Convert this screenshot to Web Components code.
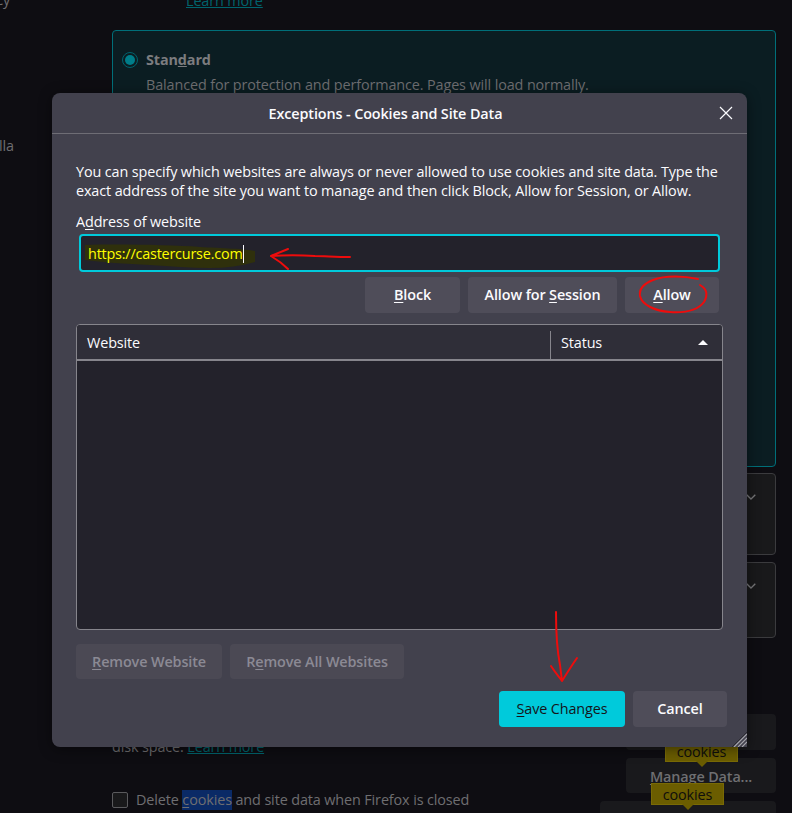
<!DOCTYPE html>
<html lang="en">
<head>
<meta charset="utf-8">
<title>Exceptions - Cookies and Site Data</title>
<style>
  html, body { margin: 0; padding: 0; background: #0e0d12; }
</style>
</head>
<body>
<pref-page>
  <pref-card selected radio>
    <b slot="title">Stan<u>d</u>ard</b>
    Balanced for protection and performance. Pages will load normally.
  </pref-card>
  <pref-card chevron style="height:82px;margin-top:6px"></pref-card>
  <pref-card chevron style="height:76px;margin-top:7px"></pref-card>
</pref-page>

<exceptions-dialog heading="Exceptions - Cookies and Site Data">
  <p>You can specify which websites are always or never allowed to use cookies and site data. Type the exact address of the site you want to manage and then click Block, Allow for Session, or Allow.</p>
</exceptions-dialog>

<red-marks></red-marks>

<script>
// Fenster-Button, Varianten über Attribute: primary, disabled, dim
class XButton extends HTMLElement {
  constructor() {
    super();
    this.attachShadow({ mode: 'open' });
    this.shadowRoot.innerHTML = `
      <style>
        :host {
          display: flex;
          position: relative;
          box-sizing: border-box;
          height: 36px;
          align-items: center;
          justify-content: center;
          border-radius: 4px;
          background: #4f4d59;
          color: #fbfbfe;
          font-weight: 600;
          white-space: nowrap;
        }
        :host([primary]) { background: #00cadb; color: #15141a; font-weight: 400; }
        :host([disabled]) { background: #4b4954; color: #8b8a94; }
        :host([dim]) { background: #19191c; color: #6f6f72; padding-top: 2px; }
        u { text-underline-offset: 2px; }
      </style>
      <slot></slot>
    `;
  }
}
customElements.define('x-button', XButton);

// Gelbe Suchmarkierung über den Einstellungen
class SpotlightTip extends HTMLElement {
  constructor() {
    super();
    this.attachShadow({ mode: 'open' });
    this.shadowRoot.innerHTML = `
      <style>
        :host {
          position: absolute;
          z-index: 1;
          box-sizing: border-box;
          height: 22px;
          width: 73px;
          padding-top: 2px;
          display: flex;
          align-items: center;
          justify-content: center;
          background: #6b5d00;
          border: 1px solid #796a05;
          color: #0f0e0c;
          font-weight: 400;
        }
        :host::after {
          content: '';
          position: absolute;
          left: 50%;
          bottom: -6px;
          margin-left: -6px;
          border: 6px solid transparent;
          border-bottom: 0;
          border-top-color: #6b5d00;
        }
      </style>
      <slot></slot>
    `;
  }
}
customElements.define('spotlight-tip', SpotlightTip);

class PrefCard extends HTMLElement {
  constructor() {
    super();
    this.attachShadow({ mode: 'open' });
    const radio = this.hasAttribute('radio') ? '<span class="radio"></span>' : '';
    const chevron = this.hasAttribute('chevron')
      ? '<svg class="chev" width="10" height="6" viewBox="0 0 10 6"><path d="M.7.7 5 5 9.3.7" fill="none" stroke="#77777a" stroke-width="1.3"/></svg>'
      : '';
    this.shadowRoot.innerHTML = `
      <style>
        :host {
          display: block;
          position: relative;
          box-sizing: border-box;
          border: 1px solid #3b3b3e;
          border-radius: 4px;
          background: #19191b;
          color: #6e6e71;
        }
        :host([selected]) {
          height: 437px;
          border-color: #006f79;
          background: #0b1d22;
        }
        .row { display: flex; gap: 8px; padding: 17px 9px 0; align-items: center; line-height: 24px; color: #7c7c7f; }
        .radio {
          box-sizing: border-box;
          width: 16px;
          height: 16px;
          border-radius: 50%;
          border: 1.5px solid #00626c;
          background: #007d89;
          background-clip: content-box;
          padding: 2px;
        }
        .desc { padding: 2px 0 0 33px; line-height: 22px; }
        .chev { position: absolute; right: 19px; top: 20px; }
      </style>
      <div class="row">${radio}<slot name="title"></slot></div>
      <div class="desc"><slot></slot></div>
      ${chevron}
    `;
  }
}
customElements.define('pref-card', PrefCard);

// Der abgedunkelte about:preferences-Hintergrund
class PrefPage extends HTMLElement {
  constructor() {
    super();
    this.attachShadow({ mode: 'open' });
    this.shadowRoot.innerHTML = `
      <style>
        :host {
          display: flex;
          isolation: isolate;
          height: 813px;
          overflow: hidden;
          background: #0e0d12;
          color: #6e6e71;
          font: 14.4px/20px "Open Sans", "Noto Sans", sans-serif;
          letter-spacing: -.12px;
        }
        a { color: #00646d; text-decoration: underline; }
        u { text-underline-offset: 2px; }
        .side {
          flex: none;
          width: 14px;
          display: flex;
          flex-direction: column;
          align-items: flex-end;
          overflow: hidden;
          white-space: nowrap;
          padding-top: 136px;
          position: relative;
        }
        .side .top { position: absolute; top: -10px; right: 4px; }
        main { flex: none; width: 664px; margin-left: 98px; padding-top: 30px; position: relative; }
        .learn { position: absolute; left: 74px; top: -9px; }
        .stack { position: relative; height: 175px; }
        .disk { position: absolute; left: 0; top: 99px; }
        .del { position: absolute; left: 0; top: 152px; display: flex; align-items: center; gap: 8px; white-space: nowrap; }
        .del i {
          box-sizing: border-box;
          width: 16px;
          height: 16px;
          border: 1px solid #5a5a5d;
          border-radius: 2px;
          background: #19191b;
        }
        mark { background: #0a2a66; color: inherit; padding: 0; display: inline-block; line-height: 20px; }
        .acts { position: absolute; right: 0; top: 76px; width: 150px; display: flex; flex-direction: column; gap: 8px; }
        .acts x-button:nth-child(2) { height: 35px; }
        .acts .wide { width: 176px; margin-left: -26px; }
        .one { left: 39px; top: 26px; }
        .two { left: 25px; top: 25px; }
      </style>
      <div class="side"><span class="top">Privacy</span><span>More from Mozilla</span></div>
      <main>
        <a class="learn">Learn more</a>
        <slot></slot>
        <div class="stack">
          <div class="disk">disk space. <a>Learn more</a></div>
          <div class="del"><i></i><span>Delete <mark><u>c</u>ookies</mark> and site data when Firefox is closed</span></div>
          <div class="acts">
            <x-button dim><spotlight-tip class="one">cookies</spotlight-tip></x-button>
            <x-button dim><span><u>M</u>anage Data...</span><spotlight-tip class="two">cookies</spotlight-tip></x-button>
            <x-button dim class="wide"></x-button>
          </div>
        </div>
      </main>
    `;
  }
}
customElements.define('pref-page', PrefPage);

class SiteTable extends HTMLElement {
  constructor() {
    super();
    this.attachShadow({ mode: 'open' });
    this.shadowRoot.innerHTML = `
      <style>
        :host {
          display: flex;
          flex-direction: column;
          box-sizing: border-box;
          height: 307px;
          border: 1px solid #86858c;
          border-radius: 4px;
          background: #23222b;
          overflow: hidden;
        }
        header {
          flex: none;
          display: grid;
          grid-template-columns: 473px 1fr;
          height: 36px;
          box-sizing: border-box;
          background: #2f2e38;
          border-bottom: 2px solid #86858c;
          align-items: end;
        }
        .name { padding: 2px 0 0 10px; align-self: center; }
        .status {
          display: flex;
          justify-content: space-between;
          align-items: center;
          height: 28px;
          box-sizing: border-box;
          padding: 0 14px 4px 10px;
          border-left: 1px solid #86858c;
        }
      </style>
      <header>
        <span class="name">Website</span>
        <span class="status">Status
          <svg width="10" height="5" viewBox="0 0 10 5"><path d="M5 0 10 5H0Z" fill="#fbfbfe"/></svg>
        </span>
      </header>
    `;
  }
}
customElements.define('site-table', SiteTable);

class ExceptionsDialog extends HTMLElement {
  constructor() {
    super();
    this.attachShadow({ mode: 'open' });
    const heading = this.getAttribute('heading');
    this.shadowRoot.innerHTML = `
      <style>
        :host {
          position: absolute;
          left: 52px;
          top: 93px;
          width: 695px;
          height: 654px;
          display: flex;
          flex-direction: column;
          background: #42414d;
          border-radius: 8px 8px 0 8px;
          color: #fbfbfe;
          font: 14.4px/20px "Open Sans", "Noto Sans", sans-serif;
          letter-spacing: -.12px;
          box-shadow: 0 2px 14px rgba(0, 0, 0, .45);
        }
        .title {
          flex: none;
          position: relative;
          height: 41px;
          box-sizing: border-box;
          padding: 1px 28px 0 0;
          border-bottom: 1px solid #6e6d75;
          display: flex;
          align-items: center;
          justify-content: center;
          font-weight: 600;
        }
        .close { position: absolute; right: 14px; top: 13px; }
        .body { flex: 1; display: flex; flex-direction: column; padding: 28px 24px 20px; min-height: 0; }
        ::slotted(p) { margin: 0; line-height: 19px; }
        label { margin-top: 12px; line-height: 20px; }
        u { text-underline-offset: 2px; }
        .field {
          position: relative;
          box-sizing: border-box;
          height: 38px;
          margin: 2px 3px 0 3px;
          border: 2px solid #00cadb;
          border-radius: 4px;
          background: #23222b;
          color: #ffff00;
          display: flex;
          align-items: center;
          padding: 2px 0 0 7px;
          letter-spacing: -.2px;
        }
        .field .blob { position: absolute; left: 0; top: 4px; }
        .field span { position: relative; border-right: 1px solid #fbfbfe; line-height: 18px; }
        .row { display: flex; gap: 8px; }
        .right { justify-content: flex-end; }
        .add { margin: 5px 4px 11px 0; }
        .add x-button:nth-child(1) { width: 95px; }
        .add x-button:nth-child(2) { width: 149px; }
        .add x-button:nth-child(3) { width: 94px; }
        .rm { margin-top: 14px; }
        .rm x-button { height: 35px; }
        .rm x-button:nth-child(1) { width: 146px; }
        .rm x-button:nth-child(2) { width: 174px; }
        .end { margin: 12px -4px 0 0; }
        .end x-button:nth-child(1) { width: 126px; }
        .end x-button:nth-child(2) { width: 94px; }
        .grip { position: absolute; right: 0; bottom: 0; }
      </style>
      <div class="title">${heading}
        <svg class="close" width="14" height="14" viewBox="0 0 14 14"><path d="M1 1 13 13M13 1 1 13" stroke="#fbfbfe" stroke-width="1.2"/></svg>
      </div>
      <div class="body">
        <slot></slot>
        <label>A<u>d</u>dress of website</label>
        <div class="field">
          <svg class="blob" width="178" height="30" viewBox="0 0 178 30"><path d="M4 5C40 4 90 5 119 7 140 8 165 9 174 11L174 22C160 26 145 28 129 28 110 28 90 26 69 25 45 24 20 22 4 20Z" fill="#2f300c"/></svg>
          <span>https://castercurse.com</span>
        </div>
        <div class="row right add">
          <x-button><span><u>B</u>lock</span></x-button>
          <x-button><span>Allow for <u>S</u>ession</span></x-button>
          <x-button><span><u>A</u>llow</span></x-button>
        </div>
        <site-table></site-table>
        <div class="row rm">
          <x-button disabled><span><u>R</u>emove Website</span></x-button>
          <x-button disabled><span>R<u>e</u>move All Websites</span></x-button>
        </div>
        <div class="row right end">
          <x-button primary><span><u>S</u>ave Changes</span></x-button>
          <x-button>Cancel</x-button>
        </div>
      </div>
      <svg class="grip" width="15" height="15" viewBox="0 0 15 15"><path d="M15 0 0 15" stroke="#2a2930" stroke-width="1"/><path d="M15 2 2 15M15 6 6 15M15 10 10 15" stroke="#a5a4aa" stroke-width="1.2"/></svg>
    `;
  }
}
customElements.define('exceptions-dialog', ExceptionsDialog);

// Rote Freihand-Markierungen aus dem Screenshot
class RedMarks extends HTMLElement {
  constructor() {
    super();
    this.attachShadow({ mode: 'open' });
    this.shadowRoot.innerHTML = `
      <style>
        :host { position: absolute; left: 0; top: 0; width: 792px; height: 813px; pointer-events: none; }
        svg { display: block; }
        path { fill: none; stroke: #ee0c0c; stroke-width: 2; stroke-linecap: round; stroke-linejoin: round; }
      </style>
      <svg width="792" height="813" viewBox="0 0 792 813">
        <path d="M350 257C335 257 325 256 315 256 300 255 285 255 271 256M271 256 288 249M271 256C276 259 282 263 288 269"/>
        <path d="M698 279C685 276 665 275 653 280 643 284 639 290 640 296 642 305 655 311 670 312 685 313 698 310 704 302 708 295 707 289 700 285"/>
        <path d="M556 612C556 630 557 650 560 665L562 681M551 666C555 672 559 677 562 681 567 673 572 665 577 658"/>
      </svg>
    `;
  }
}
customElements.define('red-marks', RedMarks);
</script>
</body>
</html>
